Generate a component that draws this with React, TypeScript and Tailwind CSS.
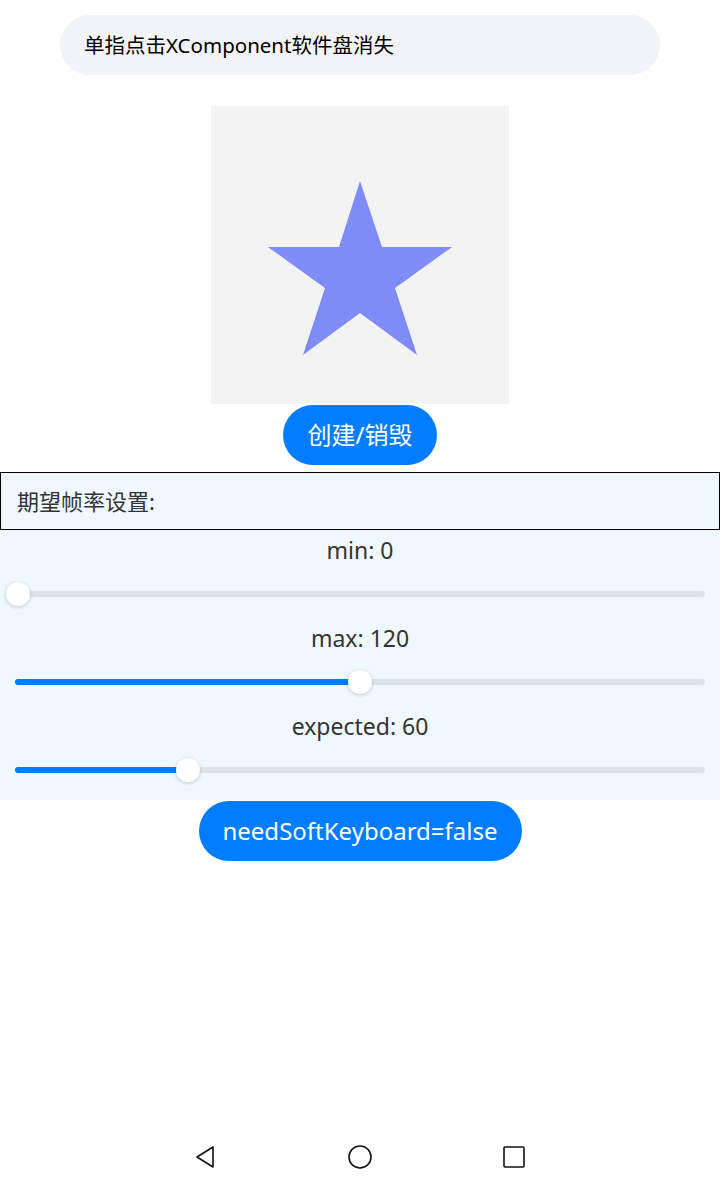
import React from "react";

const font = { fontFamily: '"Noto Sans", "Noto Sans CJK SC", sans-serif' };

function Slider({ label, value, max }: { label: string; value: number; max: number }) {
  const pct = (value / max) * 100;
  return (
    <div className="flex flex-col">
      <div className="h-[40px] flex items-center justify-center text-[23px] text-[#333]">{label}</div>
      <div className="h-[48px] flex items-center px-[15px]">
        <div className="relative w-full h-[6px] rounded-full bg-[#dde3ea]">
          <div className="absolute left-0 top-0 h-full rounded-full bg-[#007dff]" style={{ width: `${pct}%` }} />
          <div
            className="absolute top-1/2 w-[24px] h-[24px] -translate-x-1/2 -translate-y-1/2 rounded-full bg-white shadow-[0_1px_4px_rgba(0,0,0,0.2)]"
            style={{ left: `calc(${pct}% + ${pct === 0 ? 3 : 0}px)` }}
          />
        </div>
      </div>
    </div>
  );
}

export default function App() {
  return (
    <div className="w-[720px] h-[1193px] bg-white flex flex-col items-center" style={font}>
      <div className="mt-[15px] w-[600px] h-[60px] rounded-full bg-[#f1f3f5] flex items-center px-[24px] text-[20.5px] text-black">
        单指点击XComponent软件盘消失
      </div>

      <div className="mt-[31px] w-[298px] h-[298px] bg-[#f3f3f3] flex items-center justify-center">
        <svg width="298" height="298" viewBox="211 106 298 298">
          <polygon
            points="360,181 382,247 452,247 395,288 417,355 360,313 303,355 325,288 268,247 339,247"
            fill="#7f8cf8"
          />
        </svg>
      </div>

      <button className="mt-[1px] w-[154px] h-[60px] rounded-full bg-[#007dff] text-white text-[24px]">
        创建/销毁
      </button>

      <div className="mt-[7px] w-full bg-[#f0f8ff] flex flex-col pb-[6px]">
        <div className="h-[58px] border border-black flex items-center px-[16px] text-[22px] text-[#333]">
          期望帧率设置:
        </div>
        <Slider label="min: 0" value={0} max={240} />
        <Slider label="max: 120" value={120} max={240} />
        <Slider label="expected: 60" value={60} max={240} />
      </div>

      <button className="mt-[1px] w-[323px] h-[60px] rounded-full bg-[#007dff] text-white text-[24px]">
        needSoftKeyboard=false
      </button>

      <div className="mt-auto mb-[20px] w-full flex justify-center gap-[130px] items-center h-[32px]">
        <svg width="24" height="24" viewBox="0 0 24 24">
          <polygon points="19,2 19,22 3,12" fill="none" stroke="#111" strokeWidth="1.6" strokeLinejoin="round" />
        </svg>
        <svg width="24" height="24" viewBox="0 0 24 24">
          <circle cx="12" cy="12" r="11" fill="none" stroke="#111" strokeWidth="1.6" />
        </svg>
        <svg width="24" height="24" viewBox="0 0 24 24">
          <rect x="2" y="2" width="20" height="20" rx="1" fill="none" stroke="#111" strokeWidth="1.6" />
        </svg>
      </div>
    </div>
  );
}
